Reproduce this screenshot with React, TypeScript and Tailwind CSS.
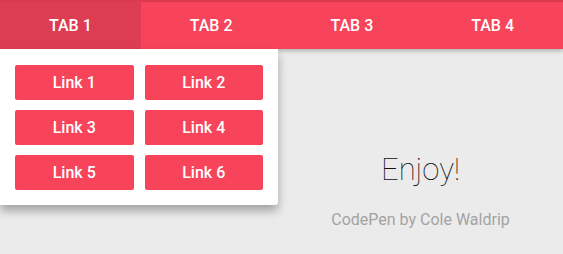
import React from "react";

const tabs = ["TAB 1", "TAB 2", "TAB 3", "TAB 4"];
const links = ["Link 1", "Link 2", "Link 3", "Link 4", "Link 5", "Link 6"];

const App = () => {
  return (
    <div className="relative h-[254px] w-[563px] overflow-hidden bg-[#ebebeb] font-['Roboto',sans-serif]">
      <nav className="relative z-10 flex h-[49px] border-t-2 border-[#d93a4e] bg-[#f7445a] shadow-[0_2px_4px_rgba(0,0,0,0.25)]">
        {tabs.map((tab, i) => (
          <div
            key={tab}
            className={`flex flex-1 items-center justify-center text-[16px] font-medium text-white ${
              i === 0 ? "bg-[#dd3d52]" : ""
            }`}
          >
            {tab}
          </div>
        ))}
      </nav>

      <div className="absolute left-0 top-[49px] z-20 w-[278px] rounded-br-[3px] bg-white px-[15px] pb-[15px] pt-[16px] shadow-[0_6px_10px_rgba(0,0,0,0.3)]">
        <div className="grid grid-cols-2 gap-x-[11px] gap-y-[10px]">
          {links.map((link) => (
            <a
              key={link}
              href="#"
              className="flex h-[35px] items-center justify-center rounded-[2px] bg-[#f7445a] text-[16px] font-medium text-white"
            >
              {link}
            </a>
          ))}
        </div>
      </div>

      <main className="flex flex-col items-center pl-[278px] pt-[103px]">
        <h1 className="text-[31px] font-thin leading-[36px] text-[#111]">Enjoy!</h1>
        <p className="mt-[20px] text-[16px] text-[#a3a3a3]">CodePen by Cole Waldrip</p>
      </main>
    </div>
  );
};

export default App;
